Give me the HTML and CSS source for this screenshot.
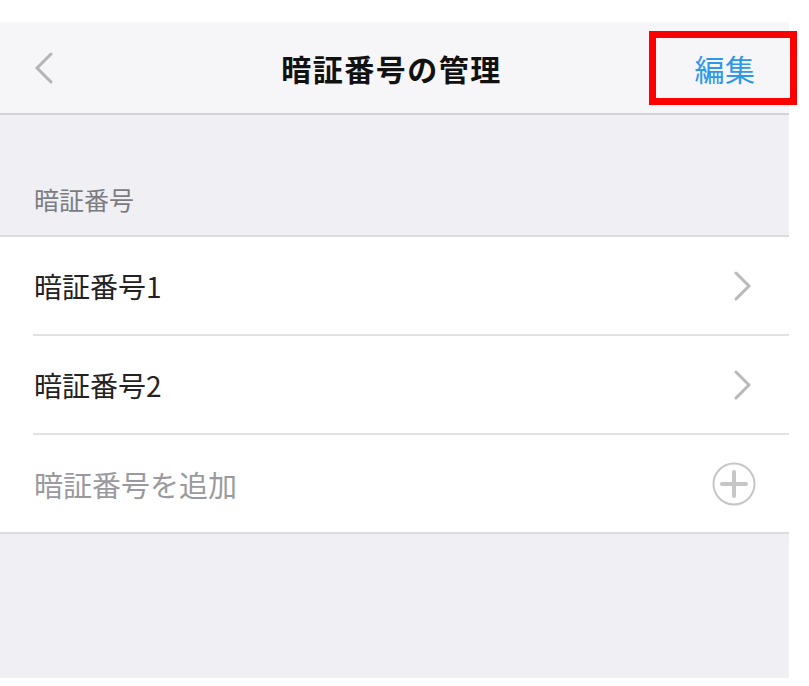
FILE: index.html
```html
<!DOCTYPE html>
<html lang="ja">
<head>
<meta charset="utf-8">
<link rel="stylesheet" href="styles.css">
</head>
<body>
<div class="screen">
  <header class="navbar">
    <div class="nav-left">
      <svg class="back" width="20" height="32" viewBox="0 0 20 32"><path d="M17 2 L3 16 L17 30" fill="none" stroke="#b4b4b8" stroke-width="3" stroke-linecap="round" stroke-linejoin="round"/></svg>
    </div>
    <div class="nav-title">暗証番号の管理</div>
    <div class="nav-right"><span class="edit">編集</span></div>
  </header>
  <main class="content">
    <div class="section-label">暗証番号</div>
    <ul class="list">
      <li class="row"><span class="row-text">暗証番号1</span>
        <svg class="chev" width="20" height="30" viewBox="0 0 20 30"><path d="M3 2 L16 15 L3 28" fill="none" stroke="#b9b9bd" stroke-width="3" stroke-linecap="round" stroke-linejoin="round"/></svg>
      </li>
      <li class="row"><span class="row-text">暗証番号2</span>
        <svg class="chev" width="20" height="30" viewBox="0 0 20 30"><path d="M3 2 L16 15 L3 28" fill="none" stroke="#b9b9bd" stroke-width="3" stroke-linecap="round" stroke-linejoin="round"/></svg>
      </li>
      <li class="row last"><span class="row-text muted">暗証番号を追加</span>
        <svg class="plus" width="44" height="44" viewBox="0 0 44 44"><circle cx="22" cy="22" r="20.5" fill="none" stroke="#c6c6c8" stroke-width="2"/><path d="M22 10 V34 M10 22 H34" stroke="#c6c6c8" stroke-width="4" stroke-linecap="round"/></svg>
      </li>
    </ul>
  </main>
</div>
</body>
</html>
```
FILE: styles.css
```css
html, body {
  margin: 0;
  padding: 0;
  background: #ffffff;
}
body {
  font-family: "Noto Sans CJK JP", "Noto Sans", sans-serif;
  padding-top: 22px;
}
.screen {
  width: 789px;
  height: 656px;
  background: #efeff4;
  display: flex;
  flex-direction: column;
}
.navbar {
  height: 91px;
  background: #f6f6f8;
  border-bottom: 2px solid #d3d3d6;
  display: grid;
  grid-template-columns: 1fr auto 1fr;
  align-items: center;
}
.nav-left {
  padding-left: 34px;
  display: flex;
  align-items: center;
}
.nav-title {
  font-size: 30px;
  font-weight: 700;
  color: #111;
  letter-spacing: 1.5px;
  margin-left: -6px;
}
.nav-right {
  display: flex;
  justify-content: flex-end;
}
.edit {
  box-sizing: border-box;
  width: 148px;
  height: 74px;
  margin-right: -8px;
  border: 7px solid #ff0000;
  color: #2d97ea;
  font-size: 30px;
  letter-spacing: 0.5px;
  display: flex;
  align-items: center;
  justify-content: center;
  padding-left: 4px;
}
.content {
  flex: 1;
  display: flex;
  flex-direction: column;
}
.section-label {
  margin-top: 68px;
  padding-left: 34px;
  height: 52px;
  font-size: 25px;
  color: #7c7c80;
  line-height: 32px;
}
.list {
  list-style: none;
  margin: 0;
  padding: 0;
  background: #fff;
  border-top: 2px solid #dcdce0;
  border-bottom: 2px solid #dcdce0;
}
.row {
  height: 97px;
  margin-left: 33px;
  padding-right: 36px;
  display: flex;
  align-items: center;
  justify-content: space-between;
  border-bottom: 2px solid #e2e2e4;
}
.row.last {
  border-bottom: none;
  height: 97px;
  padding-right: 33px;
}
.row-text {
  font-size: 28px;
  color: #222;
  padding-left: 1px;
}
.row-text.muted {
  font-size: 29px;
  color: #9a9a9e;
}
```
